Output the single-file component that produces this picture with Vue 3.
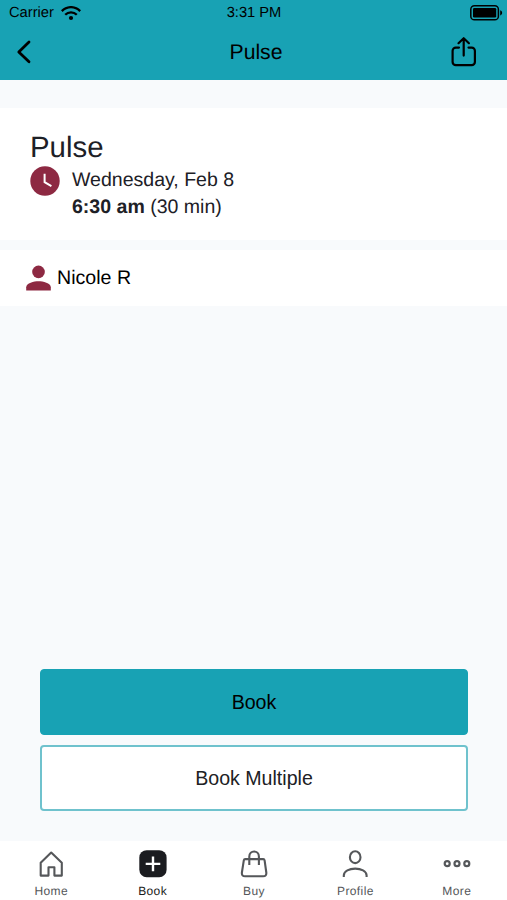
<script setup>
const tabs = [
  { id: 'home', label: 'Home' },
  { id: 'book', label: 'Book', active: true },
  { id: 'buy', label: 'Buy' },
  { id: 'profile', label: 'Profile' },
  { id: 'more', label: 'More' },
]
</script>

<template>
  <div class="screen">
    <header class="top">
      <div class="status">
        <div class="carrier">
          <span>Carrier</span>
          <svg class="wifi" width="20" height="15" viewBox="0 0 20 15" fill="none" stroke="#000" stroke-width="2.3">
            <path d="M.8 5.1C6-.2 14-.2 19.2 5.1" />
            <path d="M4.2 8.7C7.4 5.5 12.6 5.5 15.8 8.7" />
            <circle cx="10" cy="12" r="2.1" fill="#000" stroke="none" />
          </svg>
        </div>
        <span class="time">3:31 PM</span>
        <svg class="battery" width="33" height="16" viewBox="0 0 33 16">
          <rect x=".8" y=".8" width="27.6" height="14" rx="3.6" fill="none" stroke="#000" stroke-width="1.5" />
          <rect x="3" y="3" width="23.2" height="9.6" rx="1.3" />
          <path d="M30.2 5.2c2.6 1 2.6 4.2 0 5.2z" />
        </svg>
      </div>
      <div class="bar">
        <svg width="48" height="36" viewBox="0 0 48 36" fill="none" stroke="#000" stroke-width="2.8" stroke-linecap="round" stroke-linejoin="round">
          <path d="M29 8L18.8 17.9L29 27.8" />
        </svg>
        <h1>Pulse</h1>
        <svg class="share" width="28" height="32" viewBox="0 0 28 32" fill="none" stroke="#000" stroke-width="2.2" stroke-linecap="round" stroke-linejoin="round">
          <path d="M9 11.6H5.8a3.2 3.2 0 0 0-3.2 3.2v11.2a3.2 3.2 0 0 0 3.2 3.2h15.9a3.2 3.2 0 0 0 3.2-3.2V14.8a3.2 3.2 0 0 0-3.2-3.2h-3.2" />
          <path d="M13.7 19.6V2.4M8.5 7.2L13.7 2.2l5.2 5" />
        </svg>
      </div>
    </header>

    <main>
      <section class="details">
        <h2>Pulse</h2>
        <div class="when">
          <svg width="30" height="30" viewBox="0 0 30 30">
            <circle cx="15" cy="15" r="14.7" fill="#8d2942" />
            <path d="M14.6 7.8v8.4l6.8 4" fill="none" stroke="#fff" stroke-width="2" />
          </svg>
          <div class="lines">
            <p>Wednesday, Feb 8</p>
            <p><b>6:30 am</b> (30 min)</p>
          </div>
        </div>
      </section>
      <section class="person">
        <svg width="25" height="26" viewBox="0 0 25 26" fill="#8d2942">
          <circle cx="12.5" cy="6.9" r="6.3" />
          <path d="M.2 25.4v-3.2C.2 18.1 8 16.2 12.5 16.2S24.8 18.1 24.8 22.2v3.2z" />
        </svg>
        <span>Nicole R</span>
      </section>
      <div class="actions">
        <button class="primary">Book</button>
        <button class="outline">Book Multiple</button>
      </div>
    </main>

    <nav>
      <a v-for="t in tabs" :key="t.id" :class="{ active: t.active }">
        <svg width="30" height="30" viewBox="0 0 30 30" fill="none" stroke="currentColor" stroke-width="2.1" stroke-linejoin="round">
          <path v-if="t.id === 'home'" d="M4.7 26.6V13.8L15.2 3.6l10.6 10.2v12.8h-7.4v-8.4h-5.9v8.4z" />
          <template v-else-if="t.id === 'book'">
            <rect x="1.3" y="1.2" width="27.3" height="27" rx="7.4" fill="currentColor" stroke="none" />
            <path d="M15 7.6v14.6M7.7 14.9h14.6" stroke="#fff" stroke-width="2.4" />
          </template>
          <template v-else-if="t.id === 'buy'">
            <path d="M6.2 10.1h18q1.2 0 1.4 1.2l1.7 12.2q.4 3.8-3.2 3.8H6.1q-3.6 0-3.2-3.8l1.9-12.2q.2-1.2 1.4-1.2z" />
            <path d="M10.3 16V7.6c0-6.8 9.6-6.8 9.6 0V16" />
          </template>
          <template v-else-if="t.id === 'profile'">
            <ellipse cx="15.2" cy="8.2" rx="5.3" ry="5.9" />
            <path d="M3.8 28v-1.5c0-9.2 22.8-9.2 22.8 0V28" />
          </template>
          <template v-else>
            <circle v-for="x in [5.2, 15, 24.8]" :key="x" :cx="x" cy="14.7" r="2.5" stroke-width="2.2" />
          </template>
        </svg>
        <span>{{ t.label }}</span>
      </a>
    </nav>
  </div>
</template>

<style>
body {
  margin: 0;
}
</style>

<style scoped>
.screen {
  height: 900px;
  display: flex;
  flex-direction: column;
  background: #f8fafc;
  color: #000;
  font-family: "Liberation Sans", Arial, sans-serif;
  font-size: 19.6px;
  text-rendering: geometricPrecision;
}
svg {
  display: block;
  flex: none;
}
h1,
h2,
p {
  margin: 0;
  font-weight: 400;
}
.top {
  height: 80px;
  background: #18a2b4;
}
.status {
  height: 25px;
  padding: 0 4px 0 9px;
  display: grid;
  grid-template-columns: 1fr auto 1fr;
  align-items: center;
  font-size: 14.7px;
}
.carrier {
  display: flex;
  align-items: center;
  gap: 7px;
  padding-top: 1px;
}
.time {
  padding-right: 4px;
}
.battery {
  justify-self: end;
}
.bar {
  display: grid;
  grid-template-columns: 1fr auto 1fr;
  align-items: center;
  height: 54px;
}
h1 {
  font-size: 21.2px;
  padding: 2px 0 0 5px;
}
.share {
  justify-self: end;
  margin-right: 29px;
}
main {
  flex: 1;
  display: flex;
  flex-direction: column;
  padding-top: 28px;
}
.details {
  height: 132px;
  box-sizing: border-box;
  padding: 21px 30px 0;
  background: #fff;
  color: #1d2026;
}
h2 {
  font-size: 29.4px;
  line-height: 37px;
}
.when {
  display: flex;
  gap: 12px;
}
.lines {
  padding-top: 1px;
  font-size: 19.55px;
  line-height: 27px;
}
.person {
  height: 56px;
  margin-top: 10px;
  padding-left: 26px;
  display: flex;
  align-items: center;
  gap: 6px;
  background: #fff;
}
.actions {
  margin-top: auto;
  padding: 0 39px 30px 40px;
  display: flex;
  flex-direction: column;
  gap: 10px;
}
button {
  height: 66px;
  padding: 0;
  border: 1.5px solid #18a2b4;
  border-radius: 4px;
  font: inherit;
}
.primary {
  background: #18a2b4;
  color: #000;
}
.outline {
  background: #fff;
  border: 2px solid #6fc2cd;
  color: #202124;
}
nav {
  height: 59px;
  display: flex;
  background: #fff;
}
nav a {
  flex: 1;
  display: flex;
  flex-direction: column;
  align-items: center;
  padding: 8px 0 0 1px;
  color: #55575a;
  font-size: 12px;
  letter-spacing: 0.4px;
}
nav a.active {
  color: #1b1c20;
}
nav span {
  margin-top: 5px;
  line-height: 14px;
}
</style>
